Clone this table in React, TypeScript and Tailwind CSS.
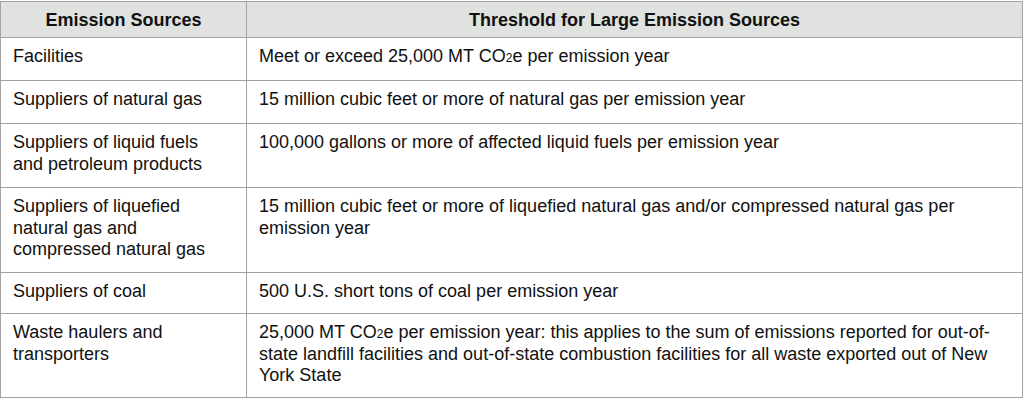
import React from 'react';

type Row = {
  source: React.ReactNode;
  threshold: React.ReactNode;
  h: string;
};

const Co2 = () => (
  <>
    CO<span className="text-[12px] leading-none">2</span>e
  </>
);

const rows: Row[] = [
  {
    source: 'Facilities',
    threshold: (
      <>
        Meet or exceed 25,000 MT <Co2 /> per emission year
      </>
    ),
    h: 'h-[43px]',
  },
  {
    source: 'Suppliers of natural gas',
    threshold: '15 million cubic feet or more of natural gas per emission year',
    h: 'h-[43px]',
  },
  {
    source: (
      <>
        Suppliers of liquid fuels
        <br />
        and petroleum products
      </>
    ),
    threshold: '100,000 gallons or more of affected liquid fuels per emission year',
    h: 'h-[64px]',
  },
  {
    source: (
      <>
        Suppliers of liquefied
        <br />
        natural gas and
        <br />
        compressed natural gas
      </>
    ),
    threshold:
      '15 million cubic feet or more of liquefied natural gas and/or compressed natural gas per emission year',
    h: 'h-[85px]',
  },
  {
    source: 'Suppliers of coal',
    threshold: '500 U.S. short tons of coal per emission year',
    h: 'h-[41px]',
  },
  {
    source: (
      <>
        Waste haulers and
        <br />
        transporters
      </>
    ),
    threshold: (
      <>
        25,000 MT <Co2 /> per emission year: this applies to the sum of emissions reported for out-of-state
        landfill facilities and out-of-state combustion facilities for all waste exported out of New York State
      </>
    ),
    h: 'h-[84px]',
  },
];

const App: React.FC = () => {
  return (
    <div className="w-[1024px] h-[400px] bg-white pt-px font-['Liberation_Sans',Arial,sans-serif] text-[18px] leading-[21.5px] text-[#111]">
      <table className="w-[1023px] border-collapse table-fixed">
        <colgroup>
          <col className="w-[246px]" />
          <col />
        </colgroup>
        <thead>
          <tr className="h-[36px] bg-[#dfe2df]">
            <th className="border border-[#a3a3a3] px-3 pt-[8px] pb-[4px] font-bold text-center align-top">
              Emission Sources
            </th>
            <th className="border border-[#a3a3a3] px-3 pt-[8px] pb-[4px] font-bold text-center align-top">
              Threshold for Large Emission Sources
            </th>
          </tr>
        </thead>
        <tbody>
          {rows.map((row, i) => (
            <tr key={i} className={row.h}>
              <td className="border border-[#a3a3a3] pl-3 pr-2 pt-2 align-top">{row.source}</td>
              <td className="border border-[#a3a3a3] pl-3 pr-3 pt-2 align-top">{row.threshold}</td>
            </tr>
          ))}
        </tbody>
      </table>
    </div>
  );
};

export default App;
